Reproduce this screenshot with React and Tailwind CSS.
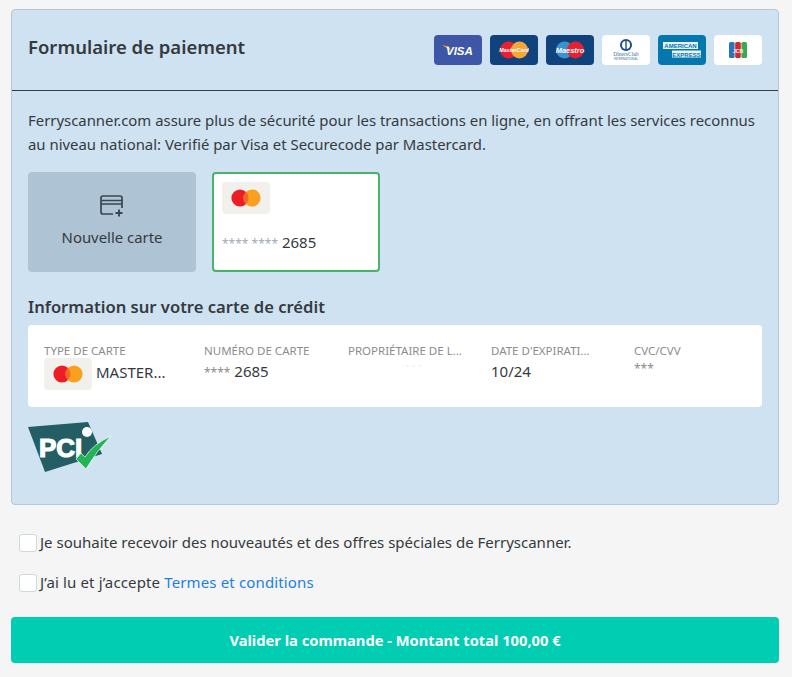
import React from 'react';

function Mastercard() {
  return (
    <div className="w-12 h-8 shrink-0 rounded bg-[#f1f0ec] flex items-center justify-center">
      <svg width="30" height="20" viewBox="0 0 30 20">
        <circle cx="9" cy="10" r="8.6" fill="#ee1c25" />
        <circle cx="21" cy="10" r="8.6" fill="#f9a01e" />
        <path d="M15 3.9a8.6 8.6 0 0 1 0 12.2a8.6 8.6 0 0 1 0-12.2z" fill="#f4662a" />
      </svg>
    </div>
  );
}

function BrandLogos() {
  return (
    <div className="flex gap-2">
      <div className="w-12 h-[30px] rounded-sm bg-[#3d57a6] flex items-center justify-center">
        <svg width="34" height="18" viewBox="0 0 34 18">
          <path d="M1 4l7 1.500 2 4z" fill="#f0a92c" />
          <text x="5" y="14" fontSize="11.5" fontWeight="700" fontStyle="italic" fontFamily="Liberation Sans" fill="#fff">VISA</text>
        </svg>
      </div>
      <div className="w-12 h-[30px] rounded-sm bg-[#10427c] flex items-center justify-center">
        <svg width="30" height="18" viewBox="0 0 30 18">
          <circle cx="9.500" cy="9" r="8.500" fill="#e9202f" />
          <circle cx="20.500" cy="9" r="8.500" fill="#f6a73a" />
          <text x="15" y="11" textAnchor="middle" fontSize="5.400" fontWeight="700" fontStyle="italic" fontFamily="Liberation Sans" fill="#fff">MasterCard</text>
        </svg>
      </div>
      <div className="w-12 h-[30px] rounded-sm bg-[#10427c] flex items-center justify-center">
        <svg width="30" height="18" viewBox="0 0 30 18">
          <circle cx="9.500" cy="9" r="8.500" fill="#3c92cd" />
          <circle cx="20.500" cy="9" r="8.500" fill="#e6202e" />
          <text x="15" y="11.500" textAnchor="middle" fontSize="7.400" fontWeight="700" fontStyle="italic" fontFamily="Liberation Sans" fill="#fff">Maestro</text>
        </svg>
      </div>
      <div className="w-12 h-[30px] rounded-sm bg-white flex items-center justify-center">
        <svg width="28" height="26" viewBox="0 0 28 26">
          <circle cx="14" cy="8" r="6" fill="#1b4f8d" />
          <circle cx="14" cy="8" r="4" fill="#fff" />
          <rect x="13.300" y="4" width="1.400" height="8" fill="#1b4f8d" />
          <text x="14" y="19" textAnchor="middle" fontSize="5.500" fontFamily="Liberation Serif" fill="#44709f">DinersClub</text>
          <text x="14" y="23" textAnchor="middle" fontSize="3" fontWeight="700" fontFamily="Liberation Sans" fill="#7d9dbd">INTERNATIONAL</text>
        </svg>
      </div>
      <div className="w-12 h-[30px] rounded-sm bg-[#0478ae] flex items-center justify-center">
        <svg width="40" height="20" viewBox="0 0 40 20">
          <rect x="1" y="2" width="35" height="7" fill="#e8f3f9" />
          <rect x="10" y="10.500" width="29" height="7" fill="#e8f3f9" />
          <text x="18.500" y="8" textAnchor="middle" fontSize="6" fontWeight="700" fontFamily="Liberation Sans" fill="#0478ae">AMERICAN</text>
          <text x="24.500" y="16.500" textAnchor="middle" fontSize="6" fontWeight="700" fontFamily="Liberation Sans" fill="#0478ae">EXPRESS</text>
        </svg>
      </div>
      <div className="w-12 h-[30px] rounded-sm bg-white flex items-center justify-center">
        <svg width="20" height="18" viewBox="0 0 20 18">
          <rect x="1" y="1" width="5.600" height="16" rx="1.500" fill="#2a75bb" />
          <rect x="7.200" y="1" width="5.600" height="16" rx="1.500" fill="#d9262e" />
          <rect x="13.400" y="1" width="5.600" height="16" rx="1.500" fill="#3aa853" />
          <text x="10" y="11.500" textAnchor="middle" fontSize="5" fontWeight="700" fontFamily="Liberation Sans" fill="#fff">JCB</text>
        </svg>
      </div>
    </div>
  );
}

function PciLogo() {
  return (
    <svg width="84" height="52" viewBox="0 0 84 52" className="block">
      <path d="M0 5L60 0L74 32L17 50z" fill="#235e64" />
      <text x="11" y="35" fontSize="26" fontWeight="700" fontFamily="Liberation Sans" fill="#fff" stroke="#fff" strokeWidth="1.200">PCI</text>
      <circle cx="59" cy="10" r="5" fill="#fff" />
      <path d="M48 37L58 47Q68 30 83 14Q65 22 57 35L53 31z" fill="#23b457" stroke="#fff" strokeWidth="0.700" />
    </svg>
  );
}

function AddCardIcon() {
  return (
    <svg width="26" height="24" viewBox="0 0 26 24" fill="none" stroke="#3a4650" strokeWidth="1.700">
      <path d="M14 20H4a2 2 0 0 1-2-2V4a2 2 0 0 1 2-2h17a2 2 0 0 1 2 2v10" />
      <path d="M2 6.500h21M2 10h21" />
      <path d="M20 15.500v7M16.500 19h7" strokeWidth="1.900" />
    </svg>
  );
}

function InfoCol({ label, className, labelWidth = 'w-[114px]', children }) {
  return (
    <div className={className}>
      <div className={`${labelWidth} text-[11.5px] leading-[14px] text-[#8c8c8c] uppercase truncate`}>{label}</div>
      {children}
    </div>
  );
}

function Checkbox() {
  return <span className="w-[18px] h-[18px] shrink-0 rounded-[3px] bg-white border border-[#cddbd8]" />;
}

export default function App() {
  return (
    <div className="min-h-[677px] bg-[#f5f5f5] pl-[11px] pr-[13px] pt-[9px] text-[#343a40] font-['Noto_Sans','Open_Sans',sans-serif] text-[14.900px] overflow-hidden">
      <section className="h-[496px] bg-[#cfe2f1] border border-[#b6c8d8] rounded-[4px]">
        <header className="h-[81px] border-b border-[#343f4a] px-4 flex justify-between pt-[25px]">
          <h2 className="text-[18.500px] leading-[24px] font-semibold">Formulaire de paiement</h2>
          <BrandLogos />
        </header>
        <div className="px-4 pt-[17px]">
          <p className="leading-6">
            Ferryscanner.com assure plus de sécurité pour les transactions en ligne, en offrant les services reconnus au niveau national: Verifié par Visa et Securecode par Mastercard.
          </p>
          <div className="flex gap-4 mt-4">
            <div className="w-[168px] h-[100px] rounded bg-[#aec3d4] flex flex-col items-center pt-[22px]">
              <AddCardIcon />
              <span className="mt-[7px] leading-6">Nouvelle carte</span>
            </div>
            <div className="w-[168px] h-[100px] rounded bg-white border-2 border-[#47b566] px-2 pt-2">
              <Mastercard />
              <div className="mt-4 leading-6 text-[15px]">
                <span className="text-[#a3abb3] text-xs">**** ****</span> 2685
              </div>
            </div>
          </div>
          <h3 className="mt-[23px] text-[16.600px] leading-6 font-semibold">Information sur votre carte de crédit</h3>
          <div className="mt-[6px] h-[82px] rounded bg-white px-4 pt-[19px] flex">
            <InfoCol label="Type de carte" className="w-[160px]">
              <div className="flex gap-1 text-[15px]">
                <Mastercard />
                <span className="leading-[28px]">MASTER...</span>
              </div>
            </InfoCol>
            <InfoCol label="Numéro de carte" className="w-[144px]">
              <div className="text-[15px] leading-[20px] mt-[3px]">
                <span className="text-[#8c8c8c] text-xs">****</span> 2685
              </div>
            </InfoCol>
            <InfoCol label="Propriétaire de la carte" className="w-[143px]">
              <div className="text-xs leading-[10px] mt-1 pl-[58px] text-[#e8e8e8]">· · ·</div>
            </InfoCol>
            <InfoCol label="Date d'expiration" labelWidth="w-[106px]" className="w-[143px]">
              <div className="text-[15px] leading-[20px] mt-[3px]">10/24</div>
            </InfoCol>
            <InfoCol label="CVC/CVV" className="w-[112px]">
              <div className="text-xs text-[#8c8c8c] leading-[20px] mt-[1px]">***</div>
            </InfoCol>
          </div>
          <div className="mt-[15px]">
            <PciLogo />
          </div>
        </div>
      </section>
      <label className="flex items-center gap-[3px] pl-2 mt-[26px] h-6 text-[15px]">
        <Checkbox />
        <span className="-translate-y-px">Je souhaite recevoir des nouveautés et des offres spéciales de Ferryscanner.</span>
      </label>
      <label className="flex items-center gap-[3px] pl-2 mt-4 h-6 text-[15px] tracking-[0.14px]">
        <Checkbox />
        <span className="-translate-y-px">J’ai lu et j’accepte <a className="text-[#1a7fe8]">Termes et conditions</a></span>
      </label>
      <button className="mt-[22px] block w-full h-[46px] rounded bg-[#00cdb1] text-white font-bold text-[14.700px]">
        Valider la commande - Montant total 100,00 €
      </button>
    </div>
  );
}
